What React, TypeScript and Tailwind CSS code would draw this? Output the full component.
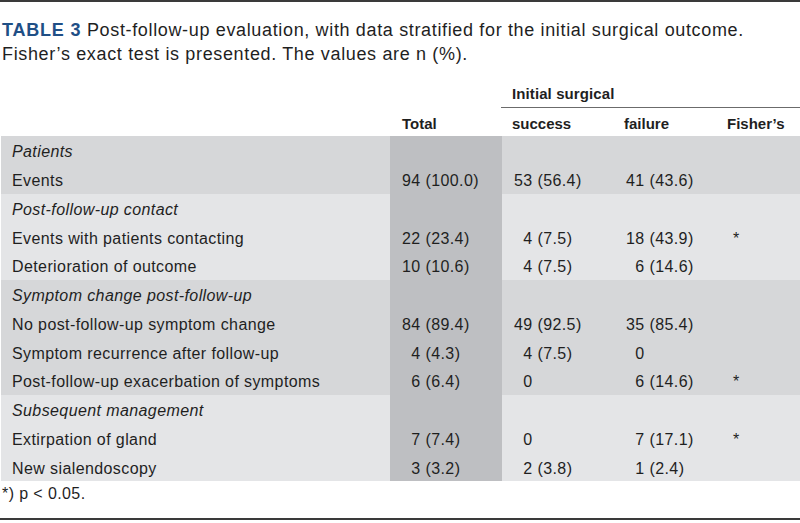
import React from 'react';

// a leading "_" pads with an invisible digit so the units line up
type Row = { label: string; italic?: boolean; vals?: string[] };

const groups: Row[][] = [
  [
    { label: 'Patients', italic: true },
    { label: 'Events', vals: ['94 (100.0)', '53 (56.4)', '41 (43.6)', ''] },
  ],
  [
    { label: 'Post-follow-up contact', italic: true },
    { label: 'Events with patients contacting', vals: ['22 (23.4)', '_4 (7.5)', '18 (43.9)', '*'] },
    { label: 'Deterioration of outcome', vals: ['10 (10.6)', '_4 (7.5)', '_6 (14.6)', ''] },
  ],
  [
    { label: 'Symptom change post-follow-up', italic: true },
    { label: 'No post-follow-up symptom change', vals: ['84 (89.4)', '49 (92.5)', '35 (85.4)', ''] },
    { label: 'Symptom recurrence after follow-up', vals: ['_4 (4.3)', '_4 (7.5)', '_0', ''] },
    { label: 'Post-follow-up exacerbation of symptoms', vals: ['_6 (6.4)', '_0', '_6 (14.6)', '*'] },
  ],
  [
    { label: 'Subsequent management', italic: true },
    { label: 'Extirpation of gland', vals: ['_7 (7.4)', '_0', '_7 (17.1)', '*'] },
    { label: 'New sialendoscopy', vals: ['_3 (3.2)', '_2 (3.8)', '_1 (2.4)', ''] },
  ],
];

const cols = 'grid grid-cols-[389px_112px_112px_104px_1fr]';

const Val = ({ v }: { v: string }) =>
  v.startsWith('_') ? (
    <span>
      <span className="invisible">0</span>
      {v.slice(1)}
    </span>
  ) : (
    <span>{v}</span>
  );

export default function App() {
  return (
    <div className="w-[800px] h-[523px] bg-white text-[#1f1f1f] font-['Liberation_Sans',Arial,sans-serif] flex flex-col overflow-hidden">
      <div className="h-[2px] bg-[#3a3a3a]" />

      {/* caption */}
      <p className="mt-[16px] pl-[2px] text-[18px] leading-[24px] tracking-[0.65px]">
        <span className="font-bold text-[#1f4f86] tracking-[0.8px]">TABLE 3</span> Post-follow-up evaluation, with data
        stratified for the initial surgical outcome.
        <br />
        Fisher’s exact test is presented. The values are n (%).
      </p>

      {/* header */}
      <div className="mt-[13px] text-[15px] font-bold">
        <div className={cols}>
          <div className="col-start-3 col-span-3 h-[29px] border-b border-[#6b6b6b] pl-[11px] flex items-center pt-[2px] tracking-[0.1px]">
            Initial surgical
          </div>
        </div>
        <div className={`${cols} h-[28px] items-center pt-[4px]`}>
          <div />
          <div className="pl-[13px]">Total</div>
          <div className="pl-[11px]">success</div>
          <div className="pl-[11px]">failure</div>
          <div className="pl-[10px]">Fisher’s</div>
        </div>
      </div>

      {/* body */}
      <div className="ml-[1px] text-[16px] tracking-[0.4px]">
        {groups.map((g, gi) => (
          <div key={gi} className={gi % 2 === 0 ? 'bg-[#d6d7d9]' : 'bg-[#e4e5e7]'}>
            {g.map((r) => (
              <div key={r.label} className={`${cols} h-[28.75px]`}>
                <div className={`pl-[11px] pt-[4px] flex items-center ${r.italic ? 'italic' : ''}`}>{r.label}</div>
                <div className="bg-[#bebfc2] pl-[12px] pt-[4px] flex items-center">
                  {r.vals && <Val v={r.vals[0]} />}
                </div>
                <div className="pl-[12px] pt-[4px] flex items-center">{r.vals && <Val v={r.vals[1]} />}</div>
                <div className="pl-[12px] pt-[4px] flex items-center">{r.vals && <Val v={r.vals[2]} />}</div>
                <div className="pl-[15px] pt-[4px] flex items-center">{r.vals?.[3]}</div>
              </div>
            ))}
          </div>
        ))}
      </div>

      <p className="mt-[3px] pl-[2px] text-[16px] leading-[20px] tracking-[0.4px]">*) p &lt; 0.05.</p>

      <div className="mt-[14px] h-[2px] bg-[#3a3a3a]" />
    </div>
  );
}
